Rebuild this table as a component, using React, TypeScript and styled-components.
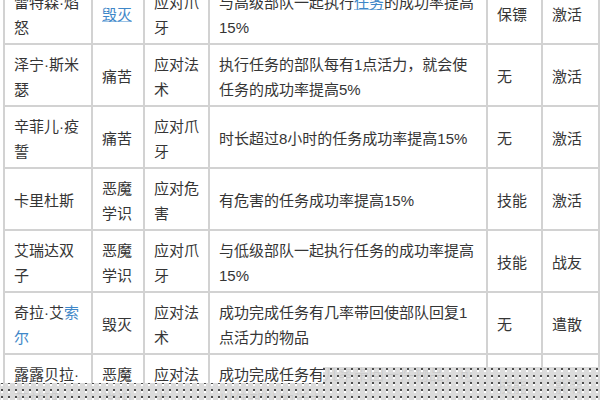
import styled, { createGlobalStyle } from 'styled-components';
import type { ReactNode } from 'react';

const GlobalStyle = createGlobalStyle`
  html, body {
    margin: 0;
    padding: 0;
    background: #fff;
  }
`;

const Page = styled.div`
  position: relative;
  width: 600px;
  height: 400px;
  overflow: hidden;
  background: #fff;
`;

const Table = styled.table`
  margin: -19px 0 0 3px;
  width: 597px;
  border-collapse: collapse;
  table-layout: fixed;
  font-family: 'Liberation Sans', 'Noto Sans CJK SC', sans-serif;
  font-size: 15px;
  line-height: 25px;
  color: #353535;
`;

const Col = styled.col<{ $w: number }>`
  width: ${(p) => p.$w}px;
`;

const Cell = styled.td`
  height: 57px;
  padding: 3px 4px 0 9px;
  border: 2px solid #d2d2d2;
  vertical-align: middle;
  white-space: nowrap;
  overflow: hidden;
`;

const Link = styled.span<{ $underline?: boolean }>`
  color: #3f87c8;
  text-decoration: ${(p) => (p.$underline ? 'underline' : 'none')};
  text-decoration-color: #9cc3e6;
`;

const Watermark = styled.div`
  position: absolute;
  left: 0;
  right: 0;
  bottom: 0;
  height: 33px;
  clip-path: polygon(0 16px, 323px 16px, 323px 0, 100% 0, 100% 100%, 0 100%);
  background-color: rgba(216, 216, 216, 0.93);
  background-image: radial-gradient(circle at 2px 2px, #4d4d4d 0.8px, transparent 1.3px),
    radial-gradient(circle at 2px 4px, #ffffff 0.8px, transparent 1.3px);
  background-size: 7px 7px;
`;

const widths = [88, 52, 65, 278, 55, 57];

const rows: ReactNode[][] = [
  [
    <>雷特森·焰<br />怒</>,
    <Link $underline>毁灭</Link>,
    <>应对爪<br />牙</>,
    <>与高级部队一起执行<Link $underline>任务</Link>的成功率提高<br />15%</>,
    '保镖',
    '激活',
  ],
  [
    <>泽宁·斯米<br />瑟</>,
    '痛苦',
    <>应对法<br />术</>,
    <>执行任务的部队每有1点活力，就会使<br />任务的成功率提高5%</>,
    '无',
    '激活',
  ],
  [
    <>辛菲儿·疫<br />誓</>,
    '痛苦',
    <>应对爪<br />牙</>,
    '时长超过8小时的任务成功率提高15%',
    '无',
    '激活',
  ],
  [
    '卡里杜斯',
    <>恶魔<br />学识</>,
    <>应对危<br />害</>,
    '有危害的任务成功率提高15%',
    '技能',
    '激活',
  ],
  [
    <>艾瑞达双<br />子</>,
    <>恶魔<br />学识</>,
    <>应对爪<br />牙</>,
    <>与低级部队一起执行任务的成功率提高<br />15%</>,
    '技能',
    '战友',
  ],
  [
    <>奇拉·艾<Link>索</Link><br /><Link>尔</Link></>,
    '毁灭',
    <>应对法<br />术</>,
    <>成功完成任务有几率带回使部队回复1<br />点活力的物品</>,
    '无',
    '遣散',
  ],
  [
    <>露露贝拉·<br />菲兹班</>,
    <>恶魔<br />学识</>,
    <>应对法<br />术</>,
    <>成功完成任务有几率带回一件物品，可<br />以使部队的活力</>,
    '技能',
    '激活',
  ],
];

const App = () => (
  <Page>
    <GlobalStyle />
    <Table>
      <colgroup>
        {widths.map((w, i) => (
          <Col key={i} $w={w} />
        ))}
      </colgroup>
      <tbody>
        {rows.map((row, r) => (
          <tr key={r}>
            {row.map((cell, c) => (
              <Cell key={c}>{cell}</Cell>
            ))}
          </tr>
        ))}
      </tbody>
    </Table>
    <Watermark />
  </Page>
);

export default App;
